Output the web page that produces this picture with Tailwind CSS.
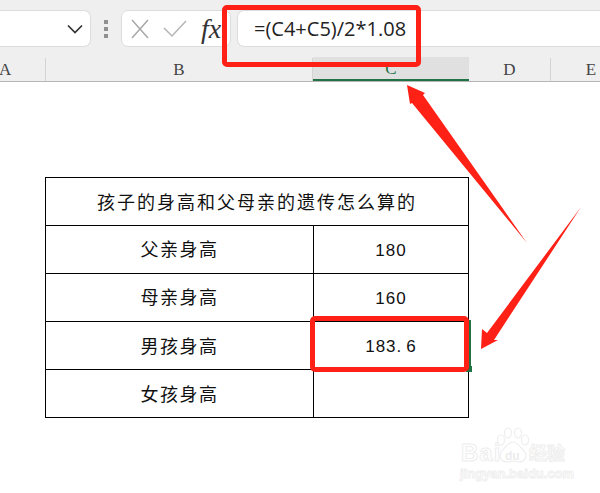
<!DOCTYPE html>
<html lang="en">
<head>
  <meta charset="UTF-8">
  <script src="https://cdn.jsdelivr.net/npm/@tailwindcss/browser@4"></script>
  <title>Excel formula</title>
</head>
<body class="bg-white">
  <div class="relative w-[600px] h-[493px] overflow-hidden bg-white font-['Liberation_Sans','Noto_Sans_CJK_SC',sans-serif]">

    <!-- formula bar -->
    <div class="h-[58px] bg-[#efefef] flex items-start pt-[10px]">
      <div class="w-[91px] h-[37px] bg-white border border-[#dcdcdc] border-l-0 rounded-r-[7px] flex items-center justify-end pr-[3px]">
        <svg class="mr-[3px]" width="18" height="10" viewBox="0 0 18 10" fill="none" stroke="#333" stroke-width="1.7"><path d="M2 1.5l7 7 7-7"/></svg>
      </div>
      <div class="w-[30px] h-[37px] flex flex-col items-center justify-center gap-[3px]">
        <span class="w-[4px] h-[4px] bg-[#909090]"></span>
        <span class="w-[4px] h-[4px] bg-[#909090]"></span>
        <span class="w-[4px] h-[4px] bg-[#909090]"></span>
      </div>
      <div class="w-[110px] h-[37px] bg-white border border-[#dcdcdc] rounded-[7px] flex items-center pl-[8px]">
        <svg width="20" height="20" viewBox="0 0 20 20" fill="none" stroke="#a8a8a8" stroke-width="1.5"><path d="M2 1l16 18M18 1L2 19"/></svg>
        <svg class="ml-[13px]" width="24" height="18" viewBox="0 0 24 18" fill="none" stroke="#b4b4b4" stroke-width="1.5"><path d="M1 8l8 8L23 1"/></svg>
        <span class="ml-[14px] text-[28px] leading-none italic text-[#333] font-['Liberation_Serif',serif]">fx</span>
      </div>
      <div class="ml-[6px] flex-1 h-[37px] bg-white border border-[#dcdcdc] rounded-l-[7px] border-r-0 flex items-center pl-[16px] text-[20px] text-[#222] font-['Open_Sans',sans-serif]">=(C4+C5)/2*1.08</div>
    </div>

    <!-- column headers -->
    <div class="h-[24px] bg-[#efefef] border-b border-[#b5b5b5] flex text-[17px] leading-[24px] text-center text-[#444] font-['Liberation_Serif',serif]">
      <div class="w-[46px] border-r border-[#d4d4d4] text-left -indent-[1px]">A</div>
      <div class="w-[267px] border-r border-[#d4d4d4]">B</div>
      <div class="w-[156px] -mt-[1px] bg-[#e0e0e0] border-b-2 border-[#217346] text-[#217346]">C</div>
      <div class="w-[82px] border-r border-[#d4d4d4]">D</div>
      <div class="flex-1 pl-[31px] whitespace-nowrap">E</div>
    </div>

    <!-- sheet table -->
    <div class="ml-[45px] mt-[95px] w-[424px] border border-black text-[18px] text-[#111]">
      <div class="h-[47px] flex items-center justify-center pt-[3px] tracking-[2px]">孩子的身高和父母亲的遗传怎么算的</div>
      <div class="h-[48px] flex border-t border-black">
        <div class="w-[268px] border-r border-black flex items-center justify-center pt-[2px] tracking-[1.5px]">父亲身高</div>
        <div class="flex-1 flex items-center justify-center pt-[2px] text-[17px] tracking-[1px]">180</div>
      </div>
      <div class="h-[48px] flex border-t border-black">
        <div class="w-[268px] border-r border-black flex items-center justify-center pt-[2px] tracking-[1.5px]">母亲身高</div>
        <div class="flex-1 flex items-center justify-center pt-[2px] text-[17px] tracking-[1px]">160</div>
      </div>
      <div class="h-[48px] flex border-t border-black">
        <div class="w-[268px] border-r border-black flex items-center justify-center pt-[3px] tracking-[1.5px]">男孩身高</div>
        <div class="flex-1 flex items-center justify-center pt-[2px] text-[17px] tracking-[1px]"><span>183</span><span class="tracking-[5px]">.</span><span>6</span></div>
      </div>
      <div class="h-[48px] flex border-t border-black">
        <div class="w-[268px] border-r border-black flex items-center justify-center pt-[3px] tracking-[1.5px]">女孩身高</div>
        <div class="flex-1"></div>
      </div>
    </div>

    <!-- annotations -->
    <div class="absolute left-[222px] top-[5px] w-[199px] h-[62px] border-[5px] border-[#ff2016] rounded-[5px]"></div>
    <div class="absolute left-[469px] top-[320px] w-[2px] h-[46px] bg-[#217346]"></div>
    <div class="absolute left-[466px] top-[366px] w-[6px] h-[6px] bg-[#217346]"></div>
    <div class="absolute left-[310px] top-[316px] w-[159px] h-[56px] border-[5px] border-[#ff2016] rounded-[5px]"></div>
    <svg class="absolute left-0 top-0" width="600" height="493" viewBox="0 0 600 493">
      <polygon fill="#ff2016" points="407,85 425,93 423,95 527,243 412,103 410,104"/>
      <polygon fill="#ff2016" points="581,207 494,340 498,340 481,349 482,329 487,333"/>
    </svg>

    <!-- watermark -->
    <div class="absolute left-[461px] top-[441px] text-white [-webkit-text-stroke:1px_#eeeeee] font-bold text-[24px] leading-none tracking-[1px]">Bai</div>
    <svg class="absolute left-[495px] top-[427px]" width="36" height="38" viewBox="0 0 36 38" fill="#fff" stroke="#eeeeee" stroke-width="1.2">
      <ellipse cx="6" cy="13" rx="3.5" ry="5"/>
      <ellipse cx="13" cy="6" rx="3.5" ry="5"/>
      <ellipse cx="23" cy="6" rx="3.5" ry="5"/>
      <ellipse cx="30" cy="13" rx="3.5" ry="5"/>
      <path d="M18 15c5 0 7 5 11 9 4 5 1 11-5 11-3 0-4-1-6-1s-3 1-6 1c-6 0-9-6-5-11 4-4 6-9 11-9z"/>
    </svg>
    <div class="absolute left-[505px] top-[450px] text-[#ececec] font-bold text-[12px] leading-none">du</div>
    <div class="absolute left-[529px] top-[445px] text-white [-webkit-text-stroke:1px_#eeeeee] font-bold text-[18px] leading-none">经验</div>
    <div class="absolute left-[460px] top-[467px] text-white [-webkit-text-stroke:1px_#efefef] font-bold text-[13px] leading-none whitespace-nowrap">jingyan.baidu.com</div>
  </div>
</body>
</html>
